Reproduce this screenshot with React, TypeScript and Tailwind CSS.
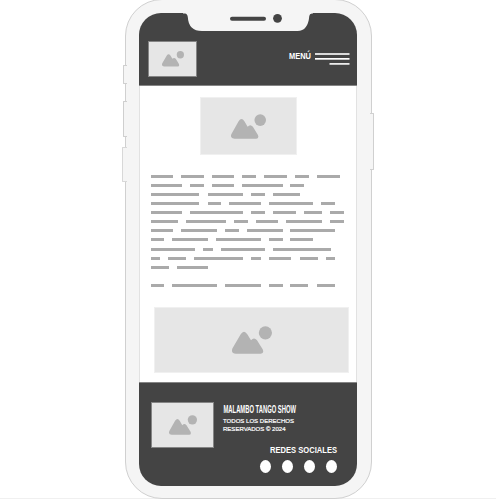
const LINES: { top: number; words: [number, number][] }[] = [
  { top: 0, words: [[151, 173], [181, 203.7], [212, 234], [242.3, 256], [264.3, 286.7], [295.3, 308.7], [317.3, 339.7]] },
  { top: 6, words: [[151, 182], [190, 204], [212, 234], [242.3, 282.7], [290.5, 304]] },
  { top: 6, words: [[151, 199], [207.5, 243], [251, 265], [273, 300]] },
  { top: 6, words: [[151, 199], [207.7, 221], [229, 260.7], [269, 313], [321, 335]] },
  { top: 6, words: [[151, 182], [190, 243], [251, 265], [273, 295.5], [304, 322], [330, 344]] },
  { top: 6, words: [[151, 178], [185.5, 226], [234, 248], [255.5, 278], [286, 322], [330, 344]] },
  { top: 6, words: [[151, 173], [181, 217], [225, 239], [247, 282.7], [290.5, 335]] },
  { top: 6, words: [[151, 164], [172, 208], [216, 260.7], [269, 283], [290.5, 313]] },
  { top: 7, words: [[151, 195], [203, 213], [220.5, 265], [273, 330.5]] },
  { top: 6, words: [[151, 160], [168, 186], [194, 243], [251, 261], [269, 291], [299.5, 317.5], [326, 335]] },
  { top: 6, words: [[151, 169], [177, 208]] },
  { top: 15, words: [[151, 164], [172, 217], [225, 260.7], [269, 282.7], [290.5, 308], [317, 335]] },
];

function Mountains({ className }: { className: string }) {
  return (
    <svg viewBox="0 0 40 28" preserveAspectRatio="none" className={className} fill="#b3b3b3">
      <circle cx="33.4" cy="6.8" r="6.6" />
      <path d="M.5 22.3 8.7 8.2Q12 3.2 15.3 8.2L19 14.2Q22 10.8 25 14.2L30.8 23.4Q32.3 27.7 28.8 27.8H3.8Q-1.5 27.3.5 22.3Z" />
    </svg>
  );
}

export default function App() {
  return (
    <div className="relative h-[499px] w-[496px] overflow-hidden bg-white font-['Liberation_Sans',Arial,sans-serif]">
      <div className="absolute bottom-0 left-0 h-px w-full bg-[#f0f0f0]" />
      <div className="relative -top-px ml-[125px] h-[500px] w-[247px] rounded-[37px] border border-[#d0d0d0] bg-[#f5f5f5] px-[13px] pt-[13px]">
        <main className="flex h-[473px] w-[218px] flex-col overflow-hidden rounded-[22px] bg-white">
          <header className="flex h-[73px] shrink-0 items-start justify-between border-b border-[#858585] bg-[#444] pl-[9px] pr-[7px]">
            <div className="mt-[28px] flex h-[36px] w-[49px] items-center justify-center border border-[#858585] bg-[#e6e6e6]">
              <Mountains className="h-[15.5px] w-[22px]" />
            </div>
            <div className="mt-[39px] flex items-start gap-[3px]">
              <svg width="23" height="11" className="overflow-visible">
                <text x="0" y="7" fill="white" fontSize="8.4" fontWeight="700" textLength="22" lengthAdjust="spacingAndGlyphs">MENÚ</text>
              </svg>
              <svg width="35" height="13" fill="white" className="overflow-visible">
                <rect y="1.2" width="34.500" height="1.6" />
                <rect y="6" width="34.500" height="1.7" />
                <rect x="14.5" y="11.1" width="20" height="1.6" />
              </svg>
            </div>
          </header>
          <section className="flex flex-1 flex-col border-x border-[#e2e2e2]">
            <div className="ml-[60px] mt-[11px] flex h-[58px] w-[97px] shrink-0 items-center justify-center border border-[#f0f0f0] bg-[#e6e6e6]">
              <Mountains className="h-[25px] w-[35px]" />
            </div>
            <div className="ml-[11px] mt-[20px] flex flex-col">
              {LINES.map((line, i) => (
                <div key={i} className="flex h-[3px]" style={{ marginTop: line.top }}>
                  {line.words.map(([start, end], j) => (
                    <span
                      key={j}
                      className="h-[3px] shrink-0 bg-[#aaa]"
                      style={{ width: end - start, marginLeft: j ? start - line.words[j - 1][1] : 0 }}
                    />
                  ))}
                </div>
              ))}
            </div>
            <div className="ml-[14px] mt-[20px] flex h-[66px] w-[195px] shrink-0 items-center justify-center border border-[#f0f0f0] bg-[#e6e6e6]">
              <Mountains className="h-[28px] w-[40px]" />
            </div>
          </section>
          <footer className="flex h-[104px] shrink-0 border-t border-[#858585] bg-[#444] pl-[12px]">
            <div className="mt-[19px] flex h-[46px] w-[63px] shrink-0 items-center justify-center border border-[#858585] bg-[#e6e6e6]">
              <Mountains className="h-[20px] w-[28px]" />
            </div>
            <div className="ml-[9px] flex flex-col pt-[18px]">
              <svg width="120" height="58" fill="white" className="overflow-visible">
                <text x="0" y="0" fontSize="10.8" fontWeight="700" transform="translate(.5 12) scale(.58 1)" textLength="125" lengthAdjust="spacingAndGlyphs">MALAMBO TANGO SHOW</text>
                <text x="0" y="22" fontSize="6.2" stroke="white" strokeWidth=".2" textLength="71" lengthAdjust="spacingAndGlyphs">TODOS LOS DERECHOS</text>
                <text x="0" y="30" fontSize="6.2" stroke="white" strokeWidth=".2" textLength="62.5" lengthAdjust="spacingAndGlyphs">RESERVADOS © 2024</text>
                <text x="47" y="52" fontSize="8.4" fontWeight="700" textLength="67" lengthAdjust="spacingAndGlyphs">REDES SOCIALES</text>
              </svg>
              <div className="ml-[37px] mt-[1px] flex gap-[11px]">
                {[0, 1, 2, 3].map((n) => (
                  <i key={n} className="h-[13px] w-[11px] rounded-[50%] bg-white" />
                ))}
              </div>
            </div>
          </footer>
        </main>
      </div>
      <div className="absolute left-[123px] top-[65px] h-[19px] w-[4px] rounded-l-[1px] border border-r-0 border-[#cfcfcf] bg-[#f5f5f5]" />
      <div className="absolute left-[123px] top-[101px] h-[36px] w-[4px] rounded-l-[1px] border border-r-0 border-[#cfcfcf] bg-[#f5f5f5]" />
      <div className="absolute left-[122px] top-[147px] h-[35px] w-[5px] rounded-l-[1px] border border-r-0 border-[#d8d8d8] bg-[#f5f5f5]" />
      <div className="absolute left-[370px] top-[113px] h-[57px] w-[4px] rounded-r-[1px] border border-l-0 border-[#d0d0d0] bg-[#f5f5f5]" />
      <svg className="absolute left-[183px] top-[11px]" width="130" height="21">
        <path d="M0 0H130V2.500H129Q126.500 2.500 126.300 5Q125 20 114.500 20H19Q5.500 20 4.800 6Q4.300 2.500 2 2.500H0Z" fill="#f5f5f5" />
        <rect x="47" y="5.700" width="36" height="4" rx="2" fill="#444" />
        <circle cx="94.500" cy="7.300" r="4.400" fill="#444" />
      </svg>
    </div>
  );
}
